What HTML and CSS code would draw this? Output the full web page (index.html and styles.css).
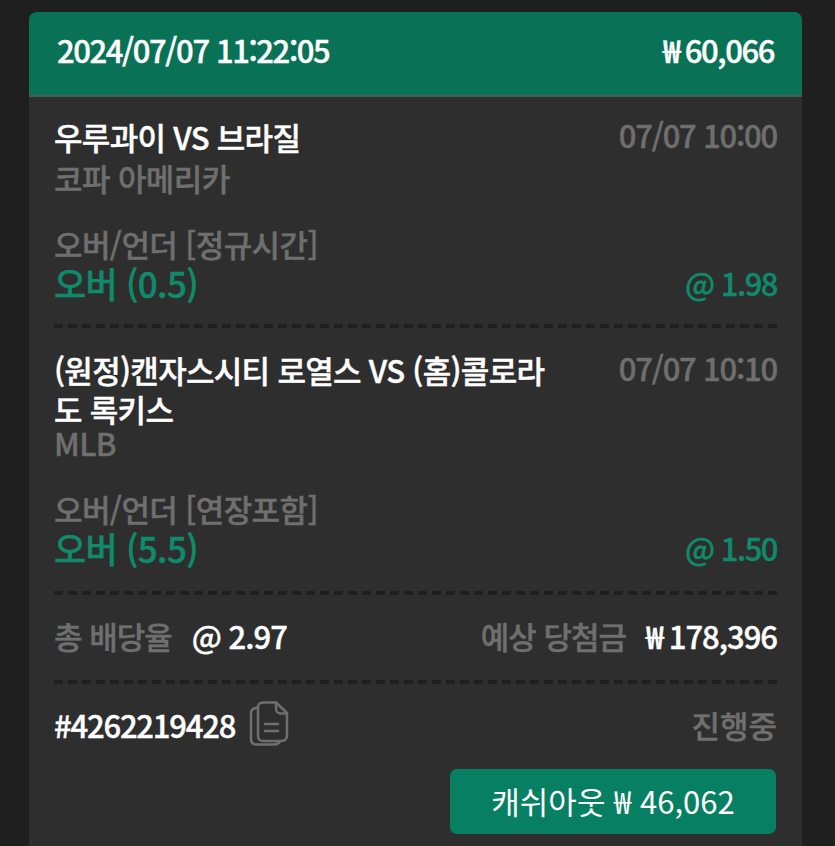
FILE: index.html
```html
<!DOCTYPE html>
<html lang="ko">
<head>
    <meta charset="UTF-8">
    <meta name="viewport" content="width=device-width, initial-scale=1.0">
    <title>Bet Slip</title>
    <link rel="stylesheet" href="styles.css">
</head>
<body>
    <div class="card">
        <div class="card-header">
            <span>2024/07/07 11:22:05</span>
            <span>₩ 60,066</span>
        </div>

        <div class="card-body">
            <div class="bet">
                <div class="bet-top">
                    <div class="bet-title">우루과이 VS 브라질</div>
                    <div class="bet-time">07/07 10:00</div>
                </div>
                <div class="bet-league">코파 아메리카</div>
                <div class="bet-market">오버/언더 [정규시간]</div>
                <div class="bet-pick">
                    <span class="pick-name">오버 (0.5)</span>
                    <span class="pick-odds">@ 1.98</span>
                </div>
            </div>

            <div class="divider"></div>

            <div class="bet bet-last">
                <div class="bet-top">
                    <div class="bet-title">(원정)캔자스시티 로열스 VS (홈)콜로라도 록키스</div>
                    <div class="bet-time">07/07 10:10</div>
                </div>
                <div class="bet-league">MLB</div>
                <div class="bet-market">오버/언더 [연장포함]</div>
                <div class="bet-pick">
                    <span class="pick-name">오버 (5.5)</span>
                    <span class="pick-odds">@ 1.50</span>
                </div>
            </div>

            <div class="divider"></div>

            <div class="summary">
                <div class="summary-item">
                    <span class="label">총 배당율</span>
                    <span class="value">@ 2.97</span>
                </div>
                <div class="summary-item">
                    <span class="label">예상 당첨금</span>
                    <span class="value">₩ 178,396</span>
                </div>
            </div>

            <div class="divider"></div>

            <div class="ticket">
                <div class="ticket-id">
                    <span>#4262219428</span>
                    <svg class="copy-icon" width="40" height="46" viewBox="0 0 40 46" fill="none" stroke="#6f6f6f" stroke-width="2.5" stroke-linecap="round" stroke-linejoin="round">
                        <path d="M9 6.500C4.500 7 2 8.500 2 12V38C2 41.500 4 43.500 7.500 43.500H25C28 43.500 30 42.500 31 40"/>
                        <path d="M9 6C9 3.500 11 1.500 14 1.500H27L38 12V34C38 37.500 36 40 32.500 40H14C11 40 9 38 9 35Z"/>
                        <path d="M27 1.500V8C27 10.500 29 12.500 31.500 12.500H38"/>
                        <path d="M16 23H29M16 30H29"/>
                    </svg>
                </div>
                <span class="status">진행중</span>
            </div>

            <div class="actions">
                <button class="cashout">캐쉬아웃 ₩ 46,062</button>
            </div>
        </div>
    </div>
</body>
</html>
```

FILE: styles.css
```css
* {
    margin: 0;
    padding: 0;
    box-sizing: border-box;
    font-family: "Noto Sans CJK KR", "Noto Sans", sans-serif;
}

body {
    background-color: #1f1f1f;
    height: 846px;
    overflow: hidden;
    padding: 12px 33px 0 29px;
    -webkit-text-stroke: 0.4px;
}

.card {
    height: 834px;
    background-color: #2e2e2e;
    border-radius: 8px 8px 0 0;
    overflow: hidden;
}

.card-header {
    display: flex;
    justify-content: space-between;
    align-items: center;
    height: 85px;
    padding: 0 28px 7px;
    background-color: #097155;
    border-bottom: 3px solid #2f6657;
    color: #fff;
    font-size: 31px;
    font-weight: 500;
    letter-spacing: -1.4px;
}

.card-body {
    padding: 0 25px;
}

.bet {
    padding: 20px 0 21px;
}

.bet-last {
    padding-bottom: 23px;
}

.bet-top {
    display: flex;
    justify-content: space-between;
    align-items: flex-start;
    min-height: 46px;
}

.bet-title {
    width: 500px;
    color: #fff;
    font-size: 31px;
    font-weight: 500;
    line-height: 39px;
    letter-spacing: -0.7px;
}

.bet-time {
    color: #6f6f6f;
    font-size: 31px;
    font-weight: 500;
    line-height: 35px;
    letter-spacing: -1.2px;
}

.bet-league {
    color: #6f6f6f;
    font-size: 31px;
    line-height: 30px;
    font-weight: 500;
    letter-spacing: -0.6px;
}

.bet-market {
    margin-top: 31px;
    color: #6f6f6f;
    font-size: 31px;
    line-height: 39px;
    font-weight: 500;
    letter-spacing: -0.6px;
}

.bet-pick {
    display: flex;
    justify-content: space-between;
    align-items: center;
    color: #0f8b6b;
    line-height: 40px;
    font-weight: 500;
}

.pick-name {
    font-size: 35px;
    letter-spacing: -0.7px;
}

.pick-odds {
    font-size: 31px;
    letter-spacing: -1.5px;
}

.divider {
    height: 4px;
    margin-bottom: 2px;
    background: repeating-linear-gradient(90deg, #1f1f1f 0 9px, transparent 9px 14px);
}

.summary {
    display: flex;
    justify-content: space-between;
    align-items: center;
    height: 83px;
    padding-bottom: 6px;
    font-size: 31px;
    font-weight: 500;
    letter-spacing: -1px;
}

.summary-item {
    display: flex;
    gap: 20px;
}

.label {
    color: #6f6f6f;
}

.value {
    color: #fff;
}

.ticket {
    display: flex;
    justify-content: space-between;
    align-items: center;
    height: 83px;
    padding-bottom: 7px;
    font-size: 31px;
    font-weight: 500;
    letter-spacing: -1.2px;
}

.ticket-id {
    display: flex;
    align-items: center;
    gap: 14px;
    color: #fff;
}

.status {
    color: #6f6f6f;
    letter-spacing: 0;
}

.actions {
    display: flex;
    justify-content: flex-end;
}

.cashout {
    width: 326px;
    height: 65px;
    margin-right: 1px;
    padding-bottom: 2px;
    border: none;
    border-radius: 7px;
    background-color: #077f63;
    color: #fff;
    font-size: 31px;
    font-weight: 400;
    -webkit-text-stroke: 0;
}
```
